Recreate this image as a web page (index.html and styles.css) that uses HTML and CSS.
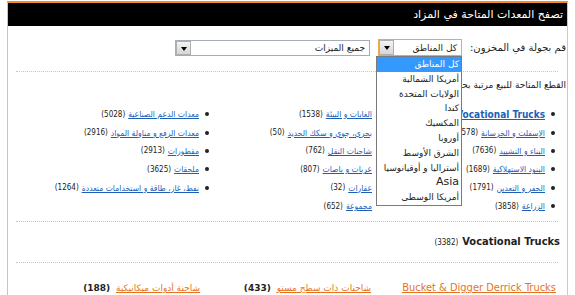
FILE: index.html
```html
<!DOCTYPE html>
<html lang="ar" dir="rtl">
<head>
    <meta charset="UTF-8">
    <title>تصفح المعدات المتاحة في المزاد</title>
    <link rel="stylesheet" href="styles.css">
</head>
<body>
    <div class="panel">
        <div class="panel-head">تصفح المعدات المتاحة في المزاد</div>
        <div class="panel-body">
            <div class="filter-row">
                <span class="filter-label">قم بجولة في المخزون:</span>
                <div class="combo combo-region is-open">
                    <span class="combo-text">كل المناطق</span>
                    <span class="combo-btn"></span>
                    <ul class="combo-list">
                        <li class="selected">كل المناطق</li>
                        <li>أمريكا الشمالية</li>
                        <li>الولايات المتحدة</li>
                        <li>كندا</li>
                        <li>المكسيك</li>
                        <li>أوروبا</li>
                        <li>الشرق الأوسط</li>
                        <li>أستراليا و أوقيانوسيا</li>
                        <li class="latin">Asia</li>
                        <li>أمريكا الوسطى</li>
                    </ul>
                </div>
                <div class="combo combo-features">
                    <span class="combo-text">جميع الميزات</span>
                    <span class="combo-btn"></span>
                </div>
            </div>

            <hr class="sep">
            <p class="cat-intro">القطع المتاحة للبيع مرتبة بحسب الفئة</p>

            <div class="cat-grid">
                <ul class="cat-list">
                    <li><a href="#" class="cat-main">Vocational Trucks</a></li>
                    <li><a href="#">الإسفلت و الخرسانة</a> <span class="count">(2578)</span></li>
                    <li><a href="#">البناء و التشييد</a> <span class="count">(7636)</span></li>
                    <li><a href="#">البنود الاستهلاكية</a> <span class="count">(1689)</span></li>
                    <li><a href="#">الحفر و التعدين</a> <span class="count">(1791)</span></li>
                    <li><a href="#">الزراعة</a> <span class="count">(3858)</span></li>
                </ul>
                <ul class="cat-list">
                    <li><a href="#">الغابات و البيئة</a> <span class="count">(1538)</span></li>
                    <li><a href="#">بحري، جوي و سكك الحديد</a> <span class="count">(50)</span></li>
                    <li><a href="#">شاحنات النقل</a> <span class="count">(762)</span></li>
                    <li><a href="#">عربات و باصات</a> <span class="count">(807)</span></li>
                    <li><a href="#">عقارات</a> <span class="count">(32)</span></li>
                    <li class="no-dot"><a href="#">مجموعة</a> <span class="count">(652)</span></li>
                </ul>
                <ul class="cat-list">
                    <li><a href="#">معدات الدعم الصناعية</a> <span class="count">(5028)</span></li>
                    <li><a href="#">معدات الرفع و مناولة المواد</a> <span class="count">(2916)</span></li>
                    <li><a href="#">مقطورات</a> <span class="count">(2913)</span></li>
                    <li><a href="#">ملحقات</a> <span class="count">(3625)</span></li>
                    <li><a href="#">نفط، غاز، طاقة و استخدامات متعددة</a> <span class="count">(1264)</span></li>
                </ul>
            </div>

            <hr class="sep">
            <h3 class="group-title"><span>Vocational Trucks</span><span class="group-count">(3382)</span></h3>
            <hr class="sep">

            <div class="sub-row">
                <div class="sub-cell sub-wide"><a href="#" class="sub-latin">Bucket &amp; Digger Derrick Trucks</a></div>
                <div class="sub-cell sub-mid"><a href="#">شاحنات ذات سطح مستو</a> <span class="count">(433)</span></div>
                <div class="sub-cell"><a href="#">شاحنة أدوات ميكانيكية</a> <span class="count">(188)</span></div>
            </div>
        </div>
    </div>
</body>
</html>
```

FILE: styles.css
```css
body {
    margin: 0;
    background: #ffffff;
    font-family: 'DejaVu Sans', sans-serif;
    font-size: 10px;
    color: #222222;
}

.panel {
    margin: 1px 7px 0 0;
    width: 559px;
    height: 292px;
    overflow: hidden;
    border-top: 2px solid #f28c28;
    border-left: 1px solid #c4c4c4;
    border-right: 1px solid #c8c8d6;
}

.panel-head {
    height: 23px;
    line-height: 23px;
    padding-right: 4px;
    background: #000000;
    color: #ffffff;
    font-size: 11px;
}

.panel-body {
    padding-right: 1px;
}

/* filter row */
.filter-row {
    display: flex;
    align-items: center;
    margin-top: 13px;
    height: 17px;
}

.filter-label {
    width: 94px;
    margin-left: 10px;
    font-size: 10px;
    white-space: nowrap;
}

.combo {
    position: relative;
    display: flex;
    align-items: center;
    box-sizing: border-box;
    height: 17px;
    border: 1px solid #a5acb5;
    background: #ffffff;
}

.combo-region {
    width: 84px;
    margin-left: 8px;
    border-color: #e9a94c;
}

.combo-features {
    width: 195px;
    height: 16px;
}

.combo-text {
    flex: 1;
    padding-right: 4px;
    font-size: 9px;
    white-space: nowrap;
}

.combo-btn {
    position: relative;
    width: 15px;
    height: 100%;
    box-sizing: border-box;
    border: 1px solid #b0b0b0;
    background: linear-gradient(#f4f4f4, #d6d6d6);
}

.combo-btn::after {
    content: "";
    position: absolute;
    left: 4px;
    top: 5px;
    border-left: 3px solid transparent;
    border-right: 3px solid transparent;
    border-top: 4px solid #000000;
}

.combo-list {
    position: absolute;
    top: 16px;
    left: -3px;
    width: 86px;
    margin: 0;
    padding: 0;
    list-style: none;
    box-sizing: border-box;
    border: 1px solid #7a7a7a;
    background: #ffffff;
    z-index: 10;
}

.combo-list li {
    height: 14.8px;
    line-height: 14.8px;
    padding-right: 2px;
    font-size: 9px;
    white-space: nowrap;
    overflow: hidden;
}

.combo-list li.selected {
    background: #3399ff;
    color: #ffffff;
}

.combo-list li.latin {
    font-size: 11px;
}

/* categories */
.sep {
    margin: 0 8px;
    height: 0;
    border: none;
    border-top: 1px dotted #c6c6c6;
}

.filter-row + .sep {
    margin-top: 15px;
}

.cat-intro {
    margin: 6px 0 0;
    line-height: 14px;
    font-size: 9px;
}

.cat-grid {
    display: grid;
    grid-template-columns: 173px 173px 173px;
    margin-top: 13px;
    margin-bottom: 6px;
}

.cat-list {
    margin: 0;
    padding: 0;
    list-style: none;
}

.cat-list li {
    display: flex;
    align-items: center;
    height: 18.4px;
    padding-right: 11px;
    font-family: 'DejaVu Sans Condensed', 'DejaVu Sans', sans-serif;
    font-stretch: condensed;
    font-size: 8.5px;
    white-space: nowrap;
}

.cat-list li::before {
    content: "";
    width: 4px;
    height: 4px;
    margin-left: 6px;
    border-radius: 50%;
    background: #222222;
    flex-shrink: 0;
}

.cat-list li.no-dot::before {
    background: transparent;
}

.cat-list a,
.sub-row a {
    color: #1d5fb8;
}

.cat-list .count {
    margin-right: 3px;
    font-size: 8px;
}

.cat-main {
    font-weight: bold;
    font-size: 10px;
}

.group-title {
    display: flex;
    align-items: baseline;
    gap: 4px;
    margin: 10px 0;
    padding-right: 6px;
    height: 20px;
    line-height: 20px;
    font-family: 'DejaVu Sans Condensed', 'DejaVu Sans', sans-serif;
    font-stretch: condensed;
    font-size: 11px;
    color: #222222;
}

.group-count {
    font-weight: normal;
    font-size: 8px;
}

.sub-row {
    display: flex;
    margin-top: 15px;
    padding-right: 10px;
    line-height: 20px;
    font-size: 9px;
    white-space: nowrap;
}

.sub-row a {
    color: #e8721c;
}

.sub-row .count {
    font-weight: bold;
    margin-right: 3px;
}

.sub-cell {
    width: 171px;
}

.sub-wide {
    width: 185px;
}

.sub-latin {
    font-family: 'DejaVu Sans Condensed', 'DejaVu Sans', sans-serif;
    font-stretch: condensed;
    font-size: 11px;
}
```
